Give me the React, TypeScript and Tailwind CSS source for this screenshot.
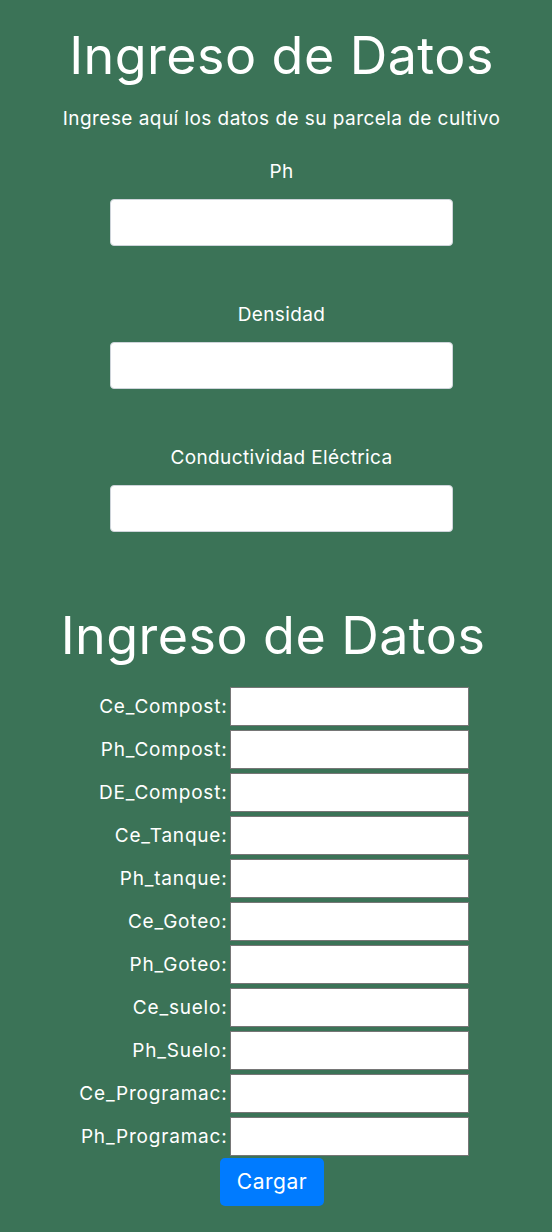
import React from "react";

const rows = [
  "Ce_Compost:",
  "Ph_Compost:",
  "DE_Compost:",
  "Ce_Tanque:",
  "Ph_tanque:",
  "Ce_Goteo:",
  "Ph_Goteo:",
  "Ce_suelo:",
  "Ph_Suelo:",
  "Ce_Programac:",
  "Ph_Programac:",
];

const fields = ["Ph", "Densidad", "Conductividad Eléctrica"];

export default function App() {
  return (
    <div
      className="w-[552px] min-h-[1232px] bg-[#3b7357] text-white"
      style={{ fontFamily: "Inter, 'Noto Sans', sans-serif" }}
    >
      <div className="flex flex-col items-center pl-[11px] pt-[26px]">
        <h1 className="text-[52px] leading-[60px] font-normal tracking-[0.45px]">Ingreso de Datos</h1>
        <p className="mt-[20px] text-[19px] leading-[26px] tracking-[0.45px]">
          Ingrese aquí los datos de su parcela de cultivo
        </p>
        <div className="mt-[27px] flex flex-col gap-[56px]">
          {fields.map((f) => (
            <div key={f} className="flex flex-col items-center">
              <label className="text-[19px] leading-[26px] tracking-[0.37px]">{f}</label>
              <input
                type="text"
                className="mt-[14px] w-[343px] h-[47px] bg-white rounded-[4px] border border-[#ced4da] outline-none"
              />
            </div>
          ))}
        </div>
      </div>
      <div className="flex flex-col items-center pr-[6px] mt-[74px]">
        <h2 className="text-[52px] leading-[60px] font-normal tracking-[0.45px]">Ingreso de Datos</h2>
        <div className="mt-[21px] flex flex-col gap-[4px]">
          {rows.map((r) => (
            <div key={r} className="flex items-center">
              <label className="w-[152px] pr-[2px] text-right text-[19px] leading-[26px] tracking-[0.8px] whitespace-nowrap">{r}</label>
              <input
                type="text"
                className="w-[239px] h-[39px] bg-white border border-[#767676] outline-none"
              />
            </div>
          ))}
        </div>
        <button className="mt-[2px] mr-[2px] w-[104px] h-[48px] rounded-[5px] bg-[#007bff] text-[21px] tracking-[0.5px] text-white">
          Cargar
        </button>
      </div>
    </div>
  );
}
